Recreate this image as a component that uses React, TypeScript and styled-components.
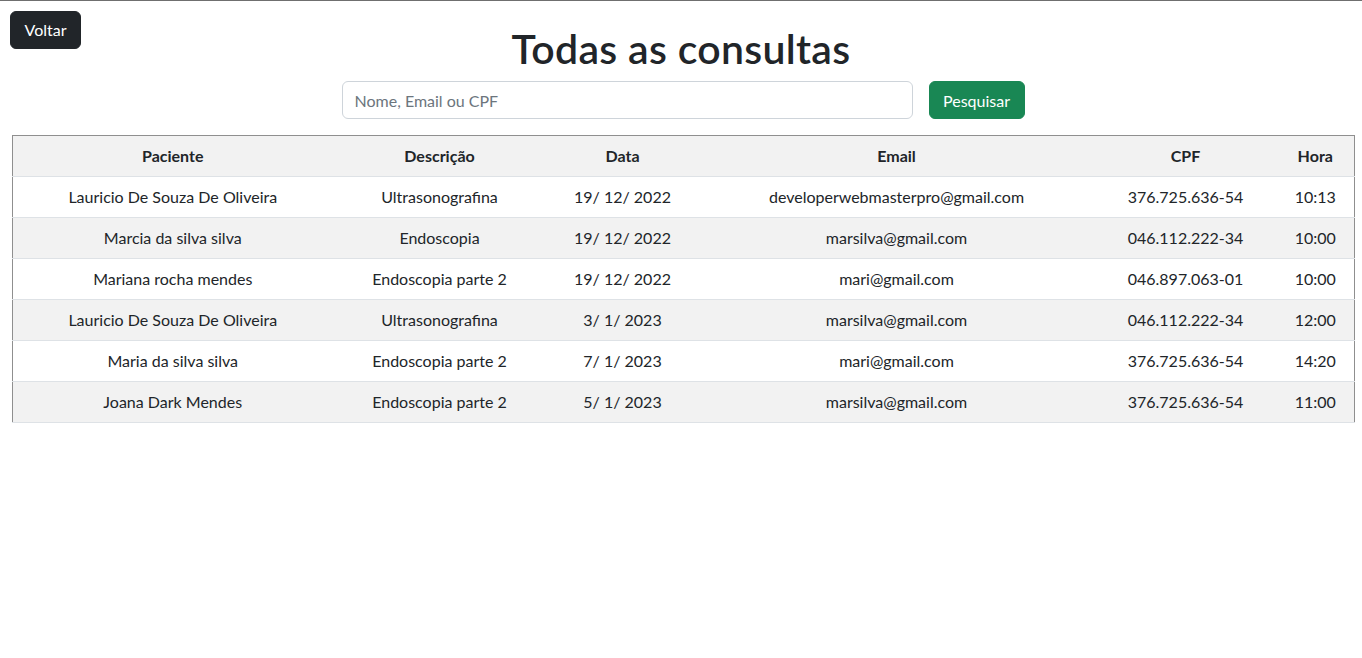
import React from "react";
import styled, { createGlobalStyle } from "styled-components";

const GlobalStyle = createGlobalStyle`
  html, body { margin: 0; padding: 0; background: #fff; }
  body {
    font-family: Lato, "Noto Sans", "Liberation Sans", sans-serif;
    font-size: 16px;
    line-height: 1.5;
    color: #212529;
  }
  * { box-sizing: border-box; }
`;

const Page = styled.div`
  border-top: 1px solid #6f6f6f;
  min-height: 657px;
`;

const Header = styled.header`
  display: grid;
  grid-template-columns: 1fr auto 1fr;
  align-items: start;
  padding: 10px 10px 0;
`;

const DarkButton = styled.button`
  justify-self: start;
  width: 71px;
  height: 38px;
  font-family: inherit;
  font-size: 16px;
  line-height: 24px;
  padding: 6px 0;
  color: #fff;
  background: #212529;
  border: 1px solid #212529;
  border-radius: 6px;
  cursor: pointer;
`;

const Title = styled.h1`
  margin: 14px 0 0;
  font-size: 41px;
  font-weight: 600;
  line-height: 48px;
  text-align: center;
  letter-spacing: 0.3px;
`;

const SearchRow = styled.form`
  display: flex;
  justify-content: center;
  gap: 16px;
  margin: 8px 0 16px;
  padding: 0 8px 0 12px;
`;

const SearchInput = styled.input`
  width: 571px;
  height: 38px;
  padding: 6px 12px;
  font-family: inherit;
  font-size: 16px;
  color: #212529;
  border: 1px solid #ced4da;
  border-radius: 6px;
  outline: none;
  &::placeholder { color: #6c757d; }
`;

const GreenButton = styled.button`
  width: 96px;
  height: 38px;
  font-family: inherit;
  font-size: 16px;
  color: #fff;
  background: #198754;
  border: 1px solid #198754;
  border-radius: 6px;
  cursor: pointer;
`;

const TableWrap = styled.div`
  padding: 0 8px 0 12px;
`;

const Table = styled.table`
  width: 100%;
  border-collapse: collapse;
  table-layout: fixed;
  border-top: 1px solid #8f8f8f;
  border-left: 1px solid #8f8f8f;
  border-right: 1px solid #8f8f8f;
`;

const Th = styled.th<{ $w: number }>`
  width: ${(p) => p.$w}px;
  padding: 8px;
  line-height: 24px;
  font-weight: 700;
  text-align: center;
  background: #f2f2f2;
  border-bottom: 1px solid #dee2e6;
`;

const Row = styled.tr<{ $striped: boolean }>`
  background: ${(p) => (p.$striped ? "#f2f2f2" : "#fff")};
`;

const Td = styled.td`
  padding: 8px;
  line-height: 24px;
  text-align: center;
  border-bottom: 1px solid #dee2e6;
  white-space: nowrap;
`;

const columns = [
  { label: "Paciente", w: 320 },
  { label: "Descrição", w: 214 },
  { label: "Data", w: 152 },
  { label: "Email", w: 396 },
  { label: "CPF", w: 182 },
  { label: "Hora", w: 78 },
];

const rows = [
  ["Lauricio De Souza De Oliveira", "Ultrasonografina", "19/ 12/ 2022", "developerwebmasterpro@gmail.com", "376.725.636-54", "10:13"],
  ["Marcia da silva silva", "Endoscopia", "19/ 12/ 2022", "marsilva@gmail.com", "046.112.222-34", "10:00"],
  ["Mariana rocha mendes", "Endoscopia parte 2", "19/ 12/ 2022", "mari@gmail.com", "046.897.063-01", "10:00"],
  ["Lauricio De Souza De Oliveira", "Ultrasonografina", "3/ 1/ 2023", "marsilva@gmail.com", "046.112.222-34", "12:00"],
  ["Maria da silva silva", "Endoscopia parte 2", "7/ 1/ 2023", "mari@gmail.com", "376.725.636-54", "14:20"],
  ["Joana Dark Mendes", "Endoscopia parte 2", "5/ 1/ 2023", "marsilva@gmail.com", "376.725.636-54", "11:00"],
];

export default function App() {
  return (
    <>
      <GlobalStyle />
      <Page>
        <Header>
          <DarkButton type="button">Voltar</DarkButton>
          <Title>Todas as consultas</Title>
          <span />
        </Header>
        <SearchRow onSubmit={(e) => e.preventDefault()}>
          <SearchInput placeholder="Nome, Email ou CPF" />
          <GreenButton type="submit">Pesquisar</GreenButton>
        </SearchRow>
        <TableWrap>
          <Table>
            <thead>
              <tr>
                {columns.map((c) => (
                  <Th key={c.label} $w={c.w}>{c.label}</Th>
                ))}
              </tr>
            </thead>
            <tbody>
              {rows.map((r, i) => (
                <Row key={i} $striped={i % 2 === 1}>
                  {r.map((cell, j) => (
                    <Td key={j}>{cell}</Td>
                  ))}
                </Row>
              ))}
            </tbody>
          </Table>
        </TableWrap>
      </Page>
    </>
  );
}
